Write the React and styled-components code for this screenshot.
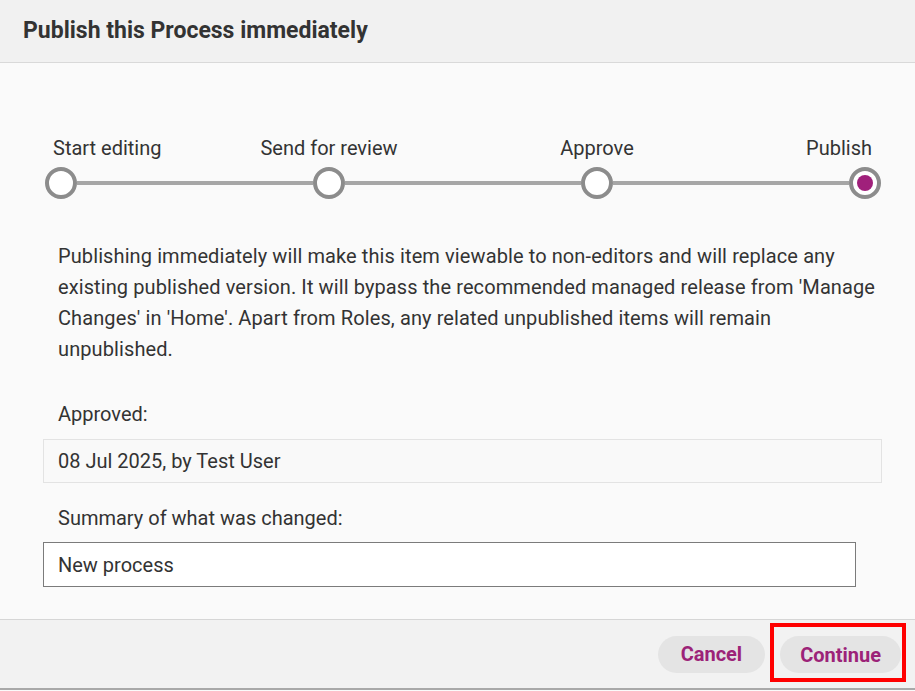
import React from "react";
import styled, { createGlobalStyle } from "styled-components";

const GlobalStyle = createGlobalStyle`
  html, body {
    margin: 0;
    padding: 0;
    background: #fafafa;
    font-family: Roboto, "Liberation Sans", sans-serif;
    color: #333;
  }
  * { box-sizing: border-box; }
`;

const Dialog = styled.div`
  width: 915px;
  display: flex;
  flex-direction: column;
  background: #fafafa;
`;

const Header = styled.div`
  height: 63px;
  padding-left: 23px;
  background: #f1f1f1;
  border-bottom: 1px solid #d9d9d9;
  display: flex;
  align-items: center;
`;

const Title = styled.h1`
  margin: 0;
  font-size: 23px;
  font-weight: 700;
  color: #333;
  line-height: 62px;
`;

const Body = styled.div`
  padding: 73px 33px 32px 43px;
`;

const Stepper = styled.div`
  width: 836px;
  margin-left: 2px;
`;

const LabelRow = styled.div`
  display: grid;
  grid-template-columns: 150px 268px 268px 150px;
  margin-bottom: 7px;
`;

const StepLabel = styled.div`
  font-size: 20px;
  line-height: 24px;
  color: #333;
  text-align: ${(p) => p.$align};
  padding-left: ${(p) => (p.$align === "left" ? "8px" : "0")};
  padding-right: ${(p) => (p.$align === "right" ? "9px" : "0")};
`;

const Track = styled.div`
  display: flex;
  align-items: center;
`;

const Dot = styled.div`
  width: 32px;
  height: 32px;
  flex: 0 0 32px;
  border-radius: 50%;
  border: 4px solid #8c8c8c;
  background: #fff;
  display: flex;
  align-items: center;
  justify-content: center;

  &::after {
    content: "";
    display: ${(p) => (p.$active ? "block" : "none")};
    width: 16px;
    height: 16px;
    border-radius: 50%;
    background: #a0207b;
  }
`;

const Segment = styled.div`
  flex: 1;
  height: 4px;
  background: #a6a6a6;
`;

const Text = styled.p`
  margin: 42px 0 0;
  padding: 0 6px 0 15px;
  font-size: 20px;
  line-height: 31px;
  letter-spacing: 0.1px;
  color: #333;
`;

const FieldLabel = styled.div`
  padding-left: 15px;
  margin-top: ${(p) => p.$top}px;
  font-size: 20px;
  line-height: 31px;
  color: #333;
`;

const ReadBox = styled.div`
  margin-top: 9px;
  height: 44px;
  padding-left: 14px;
  display: flex;
  align-items: center;
  background: #f9f9f9;
  border: 1px solid #e3e3e3;
  font-size: 20px;
  color: #333;
`;

const Input = styled.input`
  display: block;
  margin-top: 8px;
  width: 813px;
  height: 45px;
  padding: 0 14px;
  background: #fff;
  border: 1px solid #7b7b7b;
  border-radius: 0;
  font-family: Roboto, "Liberation Sans", sans-serif;
  font-size: 20px;
  color: #333;
  outline: none;
`;

const Footer = styled.div`
  height: 71px;
  background: #f2f2f2;
  border-top: 1px solid #d6d6d6;
  border-bottom: 2px solid #a9a9a9;
  display: flex;
  justify-content: flex-end;
  align-items: center;
  gap: 5px;
  padding-right: 9px;
`;

const Button = styled.button`
  height: 37px;
  padding: 0 ${(p) => p.$pad}px;
  border: none;
  border-radius: 19px;
  background: #e4e4e4;
  color: #9c2378;
  font-family: Roboto, "Liberation Sans", sans-serif;
  font-size: 20px;
  font-weight: 700;
  cursor: pointer;
`;

const Highlight = styled.div`
  border: 4px solid #ff0000;
  padding: 9px 1px 5px 6px;
  margin-top: -3px;
`;

const steps = [
  { label: "Start editing", align: "left" },
  { label: "Send for review", align: "center" },
  { label: "Approve", align: "center" },
  { label: "Publish", align: "right" },
];

export default function App() {
  return (
    <>
      <GlobalStyle />
      <Dialog>
        <Header>
          <Title>Publish this Process immediately</Title>
        </Header>
        <Body>
          <Stepper>
            <LabelRow>
              {steps.map((s) => (
                <StepLabel key={s.label} $align={s.align}>
                  {s.label}
                </StepLabel>
              ))}
            </LabelRow>
            <Track>
              {steps.map((s, i) => (
                <React.Fragment key={s.label}>
                  {i > 0 && <Segment />}
                  <Dot $active={i === steps.length - 1} />
                </React.Fragment>
              ))}
            </Track>
          </Stepper>
          <Text>
            Publishing immediately will make this item viewable to non-editors and will
            replace any existing published version. It will bypass the recommended
            managed release from 'Manage Changes' in 'Home'. Apart from Roles, any
            related unpublished items will remain unpublished.
          </Text>
          <FieldLabel $top={34}>Approved:</FieldLabel>
          <ReadBox>08 Jul 2025, by Test User</ReadBox>
          <FieldLabel $top={20}>Summary of what was changed:</FieldLabel>
          <Input readOnly defaultValue="New process" />
        </Body>
        <Footer>
          <Button $pad={23}>Cancel</Button>
          <Highlight>
            <Button $pad={20}>Continue</Button>
          </Highlight>
        </Footer>
      </Dialog>
    </>
  );
}
